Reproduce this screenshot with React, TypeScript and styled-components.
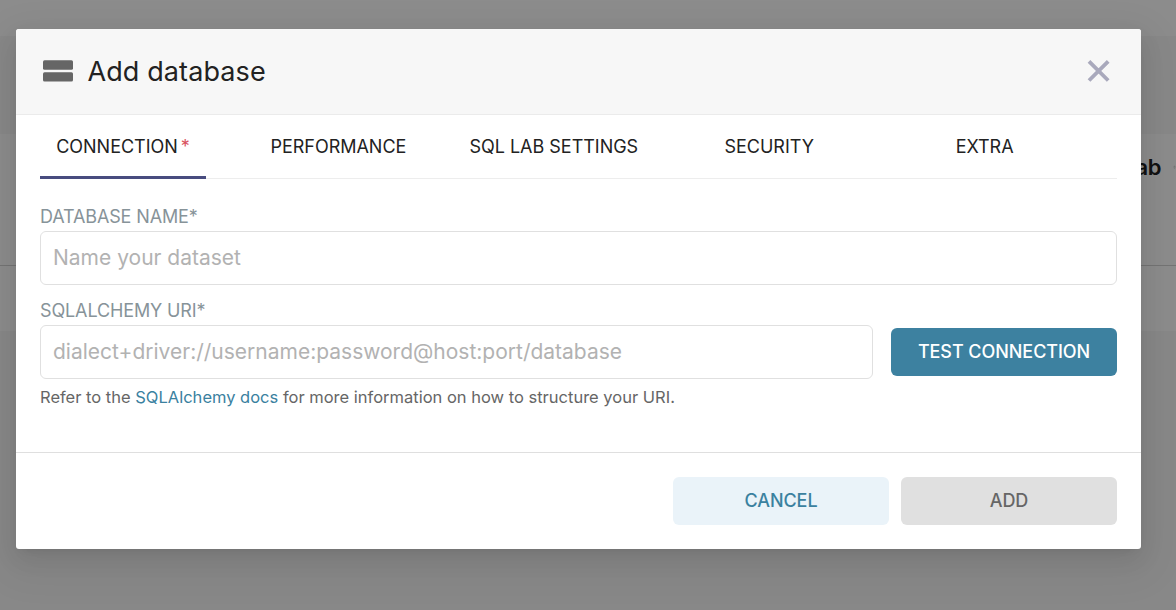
import React from "react";
import styled, { createGlobalStyle } from "styled-components";

const GlobalStyle = createGlobalStyle`
  *, *::before, *::after { box-sizing: border-box; }
  body {
    margin: 0;
    overflow: hidden;
    font-family: Inter, "Liberation Sans", sans-serif;
    color: #222;
  }
`;

const Screen = styled.div`
  position: relative;
  width: 1176px;
  height: 610px;
  overflow: hidden;
`;

const Page = styled.div`
  display: flex;
  flex-direction: column;
  height: 100%;
  background: #f7f7f7;
`;

const PageBand = styled.div<{ $height: number; $fill: string }>`
  height: ${(p) => p.$height}px;
  background: ${(p) => p.$fill};
`;

const TableHead = styled.div`
  display: flex;
  align-items: center;
  gap: 12px;
  height: 132px;
  padding: 0 0 66px 1053px;
  background: #fff;
  border-bottom: 1px solid #d4d4d4;
  white-space: nowrap;
  font-size: 22px;
  line-height: 66px;
  font-weight: 600;
  letter-spacing: -0.4px;
`;

const HeadLabel = styled.span`
  flex: none;
  width: 108px;
  text-align: right;
`;

const Overlay = styled.div`
  position: absolute;
  inset: 0;
  padding: 29px 35px 61px 16px;
  background: rgba(0, 0, 0, 0.45);
`;

const Modal = styled.section`
  display: flex;
  flex-direction: column;
  height: 520px;
  overflow: hidden;
  background: #fff;
  border-radius: 3px;
  box-shadow: 0 4.5px 9px -6px rgba(0, 0, 0, 0.12), 0 9px 24px rgba(0, 0, 0, 0.08),
    0 13.5px 42px 12px rgba(0, 0, 0, 0.05);
`;

const Header = styled.header`
  display: flex;
  align-items: center;
  height: 86px;
  padding: 0 30px 1px 27px;
  background: #f7f7f7;
  border-bottom: 1px solid #ebebeb;
`;

const Title = styled.h4`
  flex: 1;
  margin: 0 0 0 14.5px;
  padding-top: 2px;
  font-size: 27px;
  line-height: 36px;
  font-weight: 400;
  letter-spacing: 0.1px;
`;

const CloseButton = styled.button`
  display: flex;
  padding: 0;
  border: 0;
  background: none;
`;

const Body = styled.div`
  flex: 1;
  padding: 0 24px;
`;

const TabList = styled.nav`
  display: grid;
  grid-template-columns: repeat(5, 1fr);
  height: 64px;
  border-bottom: 1px solid #ededed;
`;

const Tab = styled.div<{ $active?: boolean }>`
  display: flex;
  justify-content: center;
  width: 166px;
  height: 64px;
  border-bottom: 3px solid ${(p) => (p.$active ? "#484c7f" : "transparent")};
  font-size: 18px;
  line-height: 64px;
  letter-spacing: -0.02px;
  white-space: nowrap;
`;

const Required = styled.span`
  margin-left: 3px;
  color: #d9535f;
`;

const Label = styled.label`
  display: block;
  height: 21px;
  font-size: 18px;
  line-height: 22px;
  letter-spacing: -0.13px;
  color: #879399;
`;

const Field = styled.div<{ $top: number }>`
  margin-top: ${(p) => p.$top}px;
`;

const UriRow = styled.div`
  display: flex;
  align-items: center;
  gap: 18px;
  margin-top: 4px;
`;

const Input = styled.input`
  display: block;
  flex: 1;
  width: 100%;
  min-width: 0;
  height: 54px;
  margin: 0;
  padding: 0 12px 2px;
  border: 1px solid #e0e0e0;
  border-radius: 6px;
  outline: 0;
  background: #fff;
  font-family: inherit;
  font-size: 21px;
  &::placeholder { color: #b2b2b2; opacity: 1; }
`;

const NameInput = styled(Input)`
  margin-top: 4px;
`;

const Help = styled.p`
  margin: 8px 0 0;
  font-size: 16.5px;
  line-height: 21px;
  color: #666;
  white-space: nowrap;
`;

const DocsLink = styled.a`
  color: #3a819f;
`;

const palette = {
  primary: { bg: "#3d81a0", fg: "#fff" },
  secondary: { bg: "#eaf3f9", fg: "#3a819f" },
  disabled: { bg: "#e0e0e0", fg: "#666" },
};

const Button = styled.button<{ $kind: keyof typeof palette; $width: number }>`
  flex: none;
  width: ${(p) => p.$width}px;
  height: 48px;
  padding: 0 0 2px;
  border: 0;
  border-radius: 6px;
  background: ${(p) => palette[p.$kind].bg};
  color: ${(p) => palette[p.$kind].fg};
  font-family: inherit;
  font-size: 18px;
  font-weight: 550;
  letter-spacing: -0.06px;
  white-space: nowrap;
`;

const Footer = styled.footer`
  display: flex;
  justify-content: flex-end;
  gap: 12px;
  height: 97px;
  padding: 24px;
  border-top: 1px solid #dfdfdf;
`;

const DatabaseIcon = () => (
  <svg width="30" height="22" viewBox="0 0 30 22" fill="#666">
    <rect x="0" y="0.3" width="30" height="9.4" rx="1.5" />
    <rect x="0" y="12.2" width="30" height="9.4" rx="1.5" />
  </svg>
);

const CloseIcon = () => (
  <svg width="24" height="24" viewBox="0 0 24 24" stroke="#a9a9bc" strokeWidth="3.8">
    <path d="M2 2.3 21.2 21.5M21.2 2.3 2 21.5" />
  </svg>
);

const SortIcon = () => (
  <svg width="12" height="14" viewBox="0 0 12 14" fill="#ccc">
    <path d="M1 5.5 6 0.5l5 5zM1 8.5l5 5 5-5z" />
  </svg>
);

export default function App() {
  return (
    <>
      <GlobalStyle />
      <Screen>
        <Page>
          <PageBand $height={36} $fill="#fff" />
          <PageBand $height={98} $fill="#f7f7f7" />
          <TableHead>
            <HeadLabel>SQL Lab</HeadLabel>
            <SortIcon />
          </TableHead>
          <PageBand $height={65} $fill="#fff" />
        </Page>
        <Overlay>
          <Modal>
            <Header>
              <DatabaseIcon />
              <Title>Add database</Title>
              <CloseButton aria-label="Close">
                <CloseIcon />
              </CloseButton>
            </Header>
            <Body>
              <TabList>
                <Tab $active>
                  CONNECTION<Required>*</Required>
                </Tab>
                <Tab>PERFORMANCE</Tab>
                <Tab>SQL LAB SETTINGS</Tab>
                <Tab>SECURITY</Tab>
                <Tab>EXTRA</Tab>
              </TabList>
              <Field $top={27}>
                <Label>DATABASE NAME*</Label>
                <NameInput placeholder="Name your dataset" />
              </Field>
              <Field $top={15}>
                <Label>SQLALCHEMY URI*</Label>
                <UriRow>
                  <Input placeholder="dialect+driver://username:password@host:port/database" />
                  <Button $kind="primary" $width={226}>TEST CONNECTION</Button>
                </UriRow>
                <Help>
                  Refer to the <DocsLink>SQLAlchemy docs</DocsLink> for more information on how to
                  structure your URI.
                </Help>
              </Field>
            </Body>
            <Footer>
              <Button $kind="secondary" $width={216}>CANCEL</Button>
              <Button $kind="disabled" $width={216}>ADD</Button>
            </Footer>
          </Modal>
        </Overlay>
      </Screen>
    </>
  );
}
